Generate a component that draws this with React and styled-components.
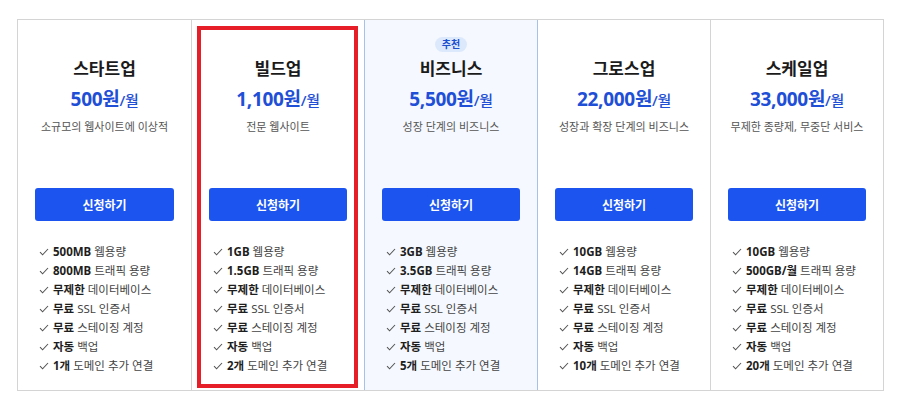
import React from "react"
import styled, { createGlobalStyle } from "styled-components"

const GlobalStyle = createGlobalStyle`
  body {
    margin: 0;
    background: #ffffff;
    font-family: "Noto Sans", "Noto Sans CJK KR", sans-serif;
    color: #222;
  }
`

const plans = [
  {
    name: "스타트업",
    price: "500원",
    desc: "소규모의 웹사이트에 이상적",
    features: [
      ["500MB", "웹용량"],
      ["800MB", "트래픽 용량"],
      ["무제한", "데이터베이스"],
      ["무료", "SSL 인증서"],
      ["무료", "스테이징 계정"],
      ["자동", "백업"],
      ["1개", "도메인 추가 연결"],
    ],
  },
  {
    name: "빌드업",
    price: "1,100원",
    desc: "전문 웹사이트",
    marked: true,
    features: [
      ["1GB", "웹용량"],
      ["1.5GB", "트래픽 용량"],
      ["무제한", "데이터베이스"],
      ["무료", "SSL 인증서"],
      ["무료", "스테이징 계정"],
      ["자동", "백업"],
      ["2개", "도메인 추가 연결"],
    ],
  },
  {
    name: "비즈니스",
    price: "5,500원",
    desc: "성장 단계의 비즈니스",
    featured: true,
    features: [
      ["3GB", "웹용량"],
      ["3.5GB", "트래픽 용량"],
      ["무제한", "데이터베이스"],
      ["무료", "SSL 인증서"],
      ["무료", "스테이징 계정"],
      ["자동", "백업"],
      ["5개", "도메인 추가 연결"],
    ],
  },
  {
    name: "그로스업",
    price: "22,000원",
    desc: "성장과 확장 단계의 비즈니스",
    features: [
      ["10GB", "웹용량"],
      ["14GB", "트래픽 용량"],
      ["무제한", "데이터베이스"],
      ["무료", "SSL 인증서"],
      ["무료", "스테이징 계정"],
      ["자동", "백업"],
      ["10개", "도메인 추가 연결"],
    ],
  },
  {
    name: "스케일업",
    price: "33,000원",
    desc: "무제한 종량제, 무중단 서비스",
    features: [
      ["10GB", "웹용량"],
      ["500GB/월", "트래픽 용량"],
      ["무제한", "데이터베이스"],
      ["무료", "SSL 인증서"],
      ["무료", "스테이징 계정"],
      ["자동", "백업"],
      ["20개", "도메인 추가 연결"],
    ],
  },
]

const Check = () => (
  <CheckIcon viewBox="0 0 10 8" width="10" height="8">
    <polyline points="1,4.2 3.6,6.8 9,1" fill="none" stroke="#555" strokeWidth="1.1" />
  </CheckIcon>
)

const App = () => {
  return (
    <Page>
      <GlobalStyle />
      <PlanGrid>
        {plans.map((plan) => (
          <Plan key={plan.name} featured={plan.featured}>
            <BadgeSlot>{plan.featured && <Badge>추천</Badge>}</BadgeSlot>
            <PlanName>{plan.name}</PlanName>
            <Price>
              {plan.price}
              <Per>/월</Per>
            </Price>
            <Desc>{plan.desc}</Desc>
            <ApplyButton>신청하기</ApplyButton>
            <FeatureList>
              {plan.features.map(([bold, rest], i) => (
                <Feature key={i}>
                  <Check />
                  <b>{bold}</b> {rest}
                </Feature>
              ))}
            </FeatureList>
            {plan.marked && <Highlight />}
          </Plan>
        ))}
      </PlanGrid>
    </Page>
  )
}

export default App

const Page = styled.div`
  padding: 19px 16px 11px 17px;
`
const PlanGrid = styled.div`
  display: grid;
  grid-template-columns: repeat(5, 1fr);
  width: 867px;
  border: 1px solid #d4d4d4;
  box-sizing: border-box;
`
const Plan = styled.div`
  position: relative;
  display: flex;
  flex-direction: column;
  align-items: stretch;
  padding: 18px 17px 15px;
  border-left: 1px solid ${(p) => (p.featured ? "#a9c1ea" : "#d4d4d4")};
  border-right: ${(p) => (p.featured ? "1px solid #a9c1ea" : "none")};
  margin-right: ${(p) => (p.featured ? "-1px" : "0")};
  z-index: ${(p) => (p.featured ? 1 : 0)};
  background: ${(p) => (p.featured ? "#f5f9ff" : "#ffffff")};
  &:first-child {
    border-left: none;
  }
`
const BadgeSlot = styled.div`
  height: 14px;
  display: flex;
  justify-content: center;
`
const Badge = styled.span`
  display: inline-block;
  height: 15px;
  line-height: 15px;
  margin-top: -1px;
  padding: 0 7px;
  border-radius: 8px;
  background: #dce9fc;
  color: #1d4fd1;
  font-size: 10px;
  font-weight: 700;
`
const PlanName = styled.div`
  margin-top: 5px;
  text-align: center;
  font-size: 17px;
  line-height: 24px;
  font-weight: 700;
  color: #1b1b1b;
`
const Price = styled.div`
  margin-top: 5px;
  text-align: center;
  font-size: 19px;
  line-height: 26px;
  font-weight: 700;
  color: #1f4fd6;
  letter-spacing: -0.3px;
`
const Per = styled.span`
  font-size: 15px;
  font-weight: 500;
`
const Desc = styled.div`
  margin-top: 5px;
  text-align: center;
  font-size: 11px;
  line-height: 18px;
  color: #555;
  white-space: nowrap;
`
const ApplyButton = styled.button`
  margin-top: 52px;
  height: 33px;
  border: none;
  border-radius: 3px;
  background: #1c54f0;
  color: #ffffff;
  font-family: inherit;
  font-size: 12px;
  font-weight: 700;
`
const FeatureList = styled.ul`
  list-style: none;
  margin: 21px 0 0;
  padding: 0 0 0 4px;
`
const Feature = styled.li`
  white-space: nowrap;
  font-size: 11.5px;
  line-height: 19px;
  color: #444;
  b {
    font-weight: 700;
    color: #1e1e1e;
  }
`
const CheckIcon = styled.svg`
  display: inline-block;
  vertical-align: middle;
  margin: -2px 4px 0 0;
`
const Highlight = styled.div`
  position: absolute;
  top: 6px;
  left: 5px;
  right: 6px;
  bottom: 2px;
  border: 4px solid #e51e27;
  pointer-events: none;
`
